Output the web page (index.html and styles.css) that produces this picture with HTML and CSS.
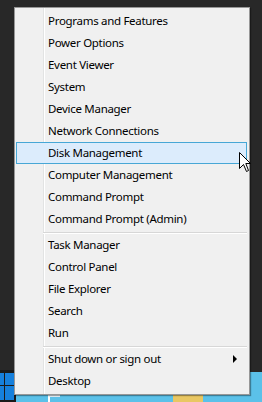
FILE: index.html
```html
<!DOCTYPE html>
<html>
<head>
<meta charset="utf-8">
<link rel="stylesheet" href="styles.css">
</head>
<body>
<div class="desktop">
  <div class="taskbar"></div>
  <div class="start-logo">
    <span></span><span></span><span></span><span></span>
  </div>
  <div class="tb-icon tb-icon-a"></div>
  <div class="tb-icon tb-icon-b"></div>
  <div class="menu">
    <ul class="group">
      <li class="item">Programs and Features</li>
      <li class="item">Power Options</li>
      <li class="item">Event Viewer</li>
      <li class="item">System</li>
      <li class="item">Device Manager</li>
      <li class="item">Network Connections</li>
      <li class="item active">Disk Management</li>
      <li class="item">Computer Management</li>
      <li class="item">Command Prompt</li>
      <li class="item">Command Prompt (Admin)</li>
    </ul>
    <div class="sep"></div>
    <ul class="group">
      <li class="item">Task Manager</li>
      <li class="item">Control Panel</li>
      <li class="item">File Explorer</li>
      <li class="item">Search</li>
      <li class="item">Run</li>
    </ul>
    <div class="sep"></div>
    <ul class="group">
      <li class="item sub">Shut down or sign out<span class="arrow"></span></li>
      <li class="item">Desktop</li>
    </ul>
  </div>
  <svg class="cursor" width="13" height="21" viewBox="0 0 13 21">
    <path d="M0.5 0.5 L0.5 16.5 L4.5 12.5 L7.5 19.5 L9.5 18.5 L6.8 11.5 L11.5 11.5 Z" fill="#fff" stroke="#000" stroke-width="1" stroke-linejoin="miter"/>
  </svg>
</div>
</body>
</html>
```

FILE: styles.css
```css
html, body {
  margin: 0;
  padding: 0;
}
body {
  background: #282828;
  font-family: "Noto Sans", "Segoe UI", sans-serif;
  font-size: 11.5px;
  letter-spacing: -0.3px;
  color: #000;
}
.desktop {
  position: relative;
  width: 262px;
  height: 402px;
  overflow: hidden;
  padding: 7px 0 0 14px;
  box-sizing: border-box;
  background: #282828;
}
.taskbar {
  position: absolute;
  left: 0;
  right: 0;
  top: 372px;
  bottom: 0;
  background: #5bc1e9;
}
.start-logo {
  position: absolute;
  left: 0;
  top: 370px;
  width: 16px;
  height: 32px;
  background: #1a1a1a;
  display: grid;
  grid-template-columns: 4px 9px;
  grid-template-rows: 12px 14px;
  gap: 1px;
  padding: 3px 0 0 0;
  box-sizing: border-box;
}
.start-logo span {
  background: #1680dc;
}
.tb-icon {
  position: absolute;
  bottom: 0;
  height: 7px;
}
.tb-icon-a {
  left: 48px;
  width: 12px;
  border-left: 2px solid #fff;
  border-top: 2px solid #e8f4fa;
  box-sizing: border-box;
}
.tb-icon-b {
  left: 173px;
  width: 30px;
  background: #e9c763;
  border-top: 2px solid #f5dd8c;
}
.menu {
  position: relative;
  width: 236px;
  background: #f0f0f0;
  border: 1px solid #979797;
  box-sizing: border-box;
  padding: 2px 0 2px 0;
  box-shadow: 1px 1px 1px rgba(0,0,0,0.35);
  background-image: linear-gradient(to right, transparent 28px, #e2e3e3 28px, #e2e3e3 29px, #ffffff 29px, #ffffff 30px, transparent 30px);
}
.group {
  list-style: none;
  margin: 0;
  padding: 0;
}
.item {
  position: relative;
  height: 22px;
  line-height: 22px;
  padding-left: 33px;
  white-space: nowrap;
  box-sizing: border-box;
}
.item.active {
  margin: 0 2px 0 1px;
  padding-left: 31px;
  line-height: 20px;
  background: #dcecfc;
  border: 1px solid #47a7d6;
}
.sep {
  height: 1px;
  margin: 2px 2px 0 28px;
  background: #d7d7d7;
  border-bottom: 1px solid #fff;
}
.arrow {
  position: absolute;
  right: 12px;
  top: 7px;
  width: 0;
  height: 0;
  border-top: 4px solid transparent;
  border-bottom: 4px solid transparent;
  border-left: 4px solid #000;
}
.cursor {
  position: absolute;
  left: 239px;
  top: 152px;
}
```
